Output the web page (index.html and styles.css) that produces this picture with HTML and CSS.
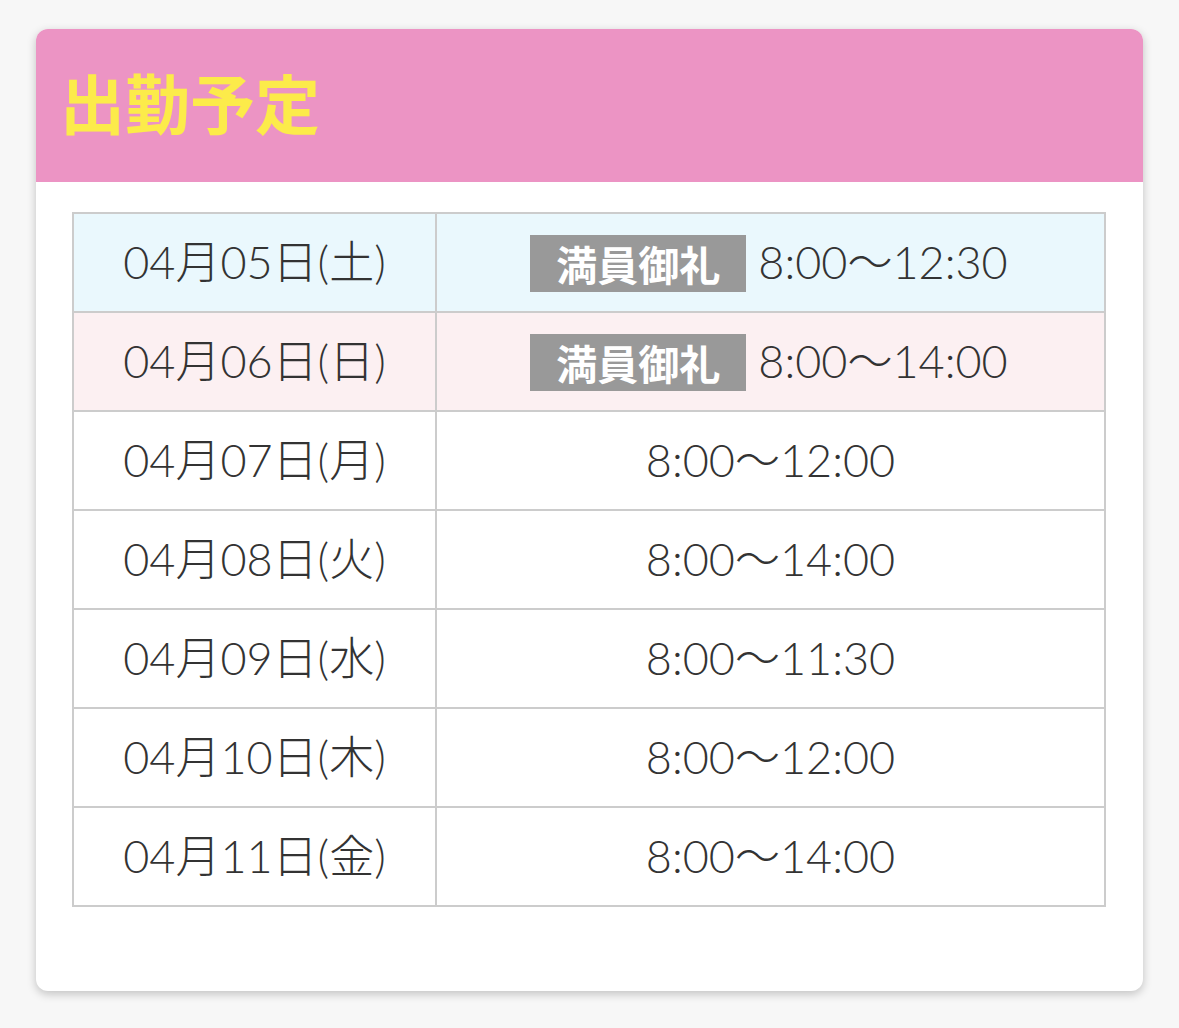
FILE: index.html
```html
<!DOCTYPE html>
<html lang="ja">
<head>
<meta charset="utf-8">
<link rel="stylesheet" href="styles.css">
</head>
<body>
<section class="card">
  <h2 class="card-title">出勤予定</h2>
  <div class="card-body">
    <table class="schedule">
      <colgroup><col class="col-date"><col class="col-time"></colgroup>
      <tr class="sat"><td>04月05日(土)</td><td><div class="slot"><span class="badge">満員御礼</span><span>8:00～12:30</span></div></td></tr>
      <tr class="sun"><td>04月06日(日)</td><td><div class="slot"><span class="badge">満員御礼</span><span>8:00～14:00</span></div></td></tr>
      <tr><td>04月07日(月)</td><td>8:00～12:00</td></tr>
      <tr><td>04月08日(火)</td><td>8:00～14:00</td></tr>
      <tr><td>04月09日(水)</td><td>8:00～11:30</td></tr>
      <tr><td>04月10日(木)</td><td>8:00～12:00</td></tr>
      <tr><td>04月11日(金)</td><td>8:00～14:00</td></tr>
    </table>
  </div>
</section>
</body>
</html>
```
FILE: styles.css
```css
html, body {
  margin: 0;
  padding: 0;
  background: #f7f7f7;
}
body {
  padding: 29px 36px 36px 36px;
  font-family: "Noto Sans CJK JP", "Noto Sans", sans-serif;
  color: #333;
}
.card {
  width: 1107px;
  background: #fff;
  border-radius: 12px;
  box-shadow: 0 3px 10px rgba(0, 0, 0, 0.22);
  overflow: hidden;
}
.card-title {
  margin: 0;
  height: 153px;
  box-sizing: border-box;
  background: #ec94c4;
  color: #fceb4a;
  font-size: 65px;
  font-weight: 700;
  line-height: 1;
  padding: 40px 0 0 24px;
  letter-spacing: 0;
}
.card-body {
  padding: 30px 37px 84px 36px;
}
.schedule {
  width: 100%;
  border-collapse: collapse;
  border: 2px solid #cccccc;
}
.col-date { width: 363px; }
.schedule td {
  border: 2px solid #cccccc;
  height: 97px;
  padding: 0;
  text-align: center;
  vertical-align: middle;
  font-family: "Lato", "Noto Sans CJK JP", sans-serif;
  font-size: 45px;
  font-weight: 300;
  line-height: 1;
  color: #333;
  white-space: nowrap;
}
.schedule tr.sat td { background: #eaf8fd; }
.schedule tr.sun td { background: #fcf0f2; }
.slot {
  display: flex;
  justify-content: center;
  align-items: center;
  gap: 12px;
  padding-right: 3px;
}
.badge {
  display: inline-block;
  background: #999999;
  color: #fff;
  font-family: "Noto Sans CJK JP", sans-serif;
  font-weight: 700;
  font-size: 41px;
  line-height: 57px;
  height: 57px;
  padding: 0 26px;
  margin-top: 1px;
}
```
